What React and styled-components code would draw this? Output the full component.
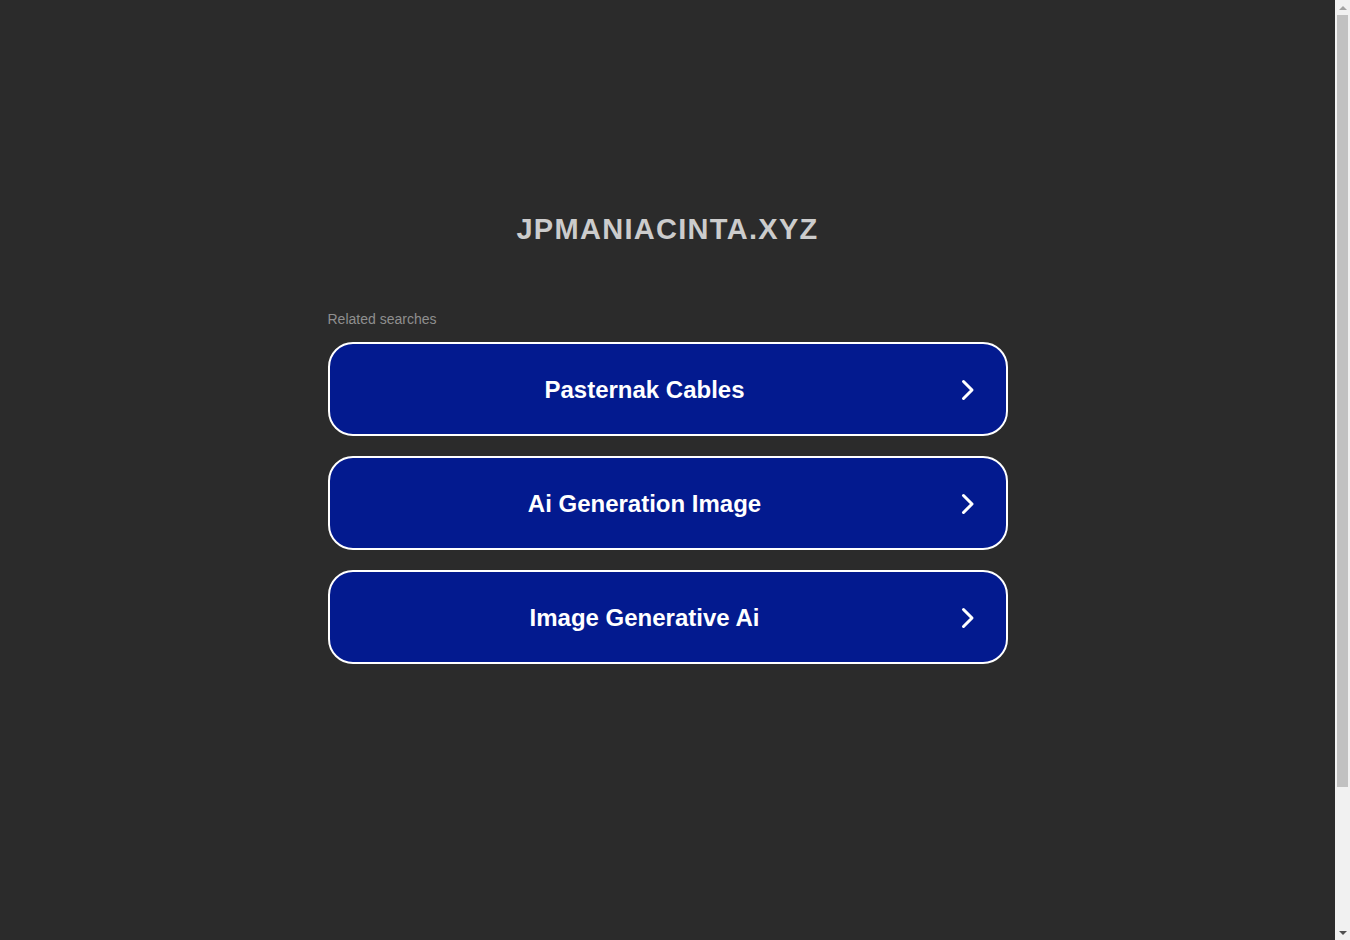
import styled, { createGlobalStyle } from 'styled-components';

const GlobalStyle = createGlobalStyle`
  html, body {
    margin: 0;
    padding: 0;
    background: #2b2b2b;
  }

  body {
    font-family: "Liberation Sans", Arial, sans-serif;
  }
`;

const Page = styled.div`
  min-height: 1100px;
  display: flex;
  flex-direction: column;
  align-items: center;
  padding: 213px 15px 0 0;
  box-sizing: border-box;
`;

const Domain = styled.h1`
  margin: 0 0 65px;
  font-size: 29px;
  line-height: 33px;
  font-weight: 700;
  letter-spacing: 1.3px;
  color: #cccccc;
  text-align: center;
`;

const Results = styled.div`
  width: 680px;
  display: flex;
  flex-direction: column;
`;

const Label = styled.div`
  font-size: 14px;
  line-height: 16px;
  color: #8f8f8f;
  margin-bottom: 15px;
`;

const List = styled.div`
  display: flex;
  flex-direction: column;
  gap: 20px;
`;

const SearchLink = styled.a`
  display: flex;
  align-items: center;
  height: 94px;
  box-sizing: border-box;
  padding: 2px 14px 0 15px;
  border: 2px solid #ffffff;
  border-radius: 25px;
  background: #031a8f;
  color: #ffffff;
  text-decoration: none;
  cursor: pointer;
`;

const LinkText = styled.span`
  flex: 1;
  text-align: center;
  font-size: 24px;
  font-weight: 700;
`;

const Arrow = styled.span`
  width: 47px;
  display: flex;
  justify-content: center;
  align-items: center;
`;

// fake browser scrollbar, the page is taller than the window
const ScrollTrack = styled.div`
  position: fixed;
  top: 0;
  right: 0;
  bottom: 0;
  width: 15px;
  background: #f1f1f1;
  display: flex;
  flex-direction: column;
  align-items: center;
`;

const ScrollButton = styled.div`
  height: 15px;
  width: 15px;
  display: flex;
  align-items: center;
  justify-content: center;

  &::before {
    content: '';
    border-left: 4px solid transparent;
    border-right: 4px solid transparent;
    ${(p) => (p.down ? 'border-top: 4px solid #505050;' : 'border-bottom: 4px solid #a3a3a3;')}
  }
`;

const ScrollThumb = styled.div`
  width: 11px;
  height: 772px;
  background: #c1c1c1;
`;

const Spacer = styled.div`
  flex: 1;
`;

const searches = ['Pasternak Cables', 'Ai Generation Image', 'Image Generative Ai'];

const Chevron = () => (
  <svg width="16" height="22" viewBox="0 0 16 22" fill="none">
    <path d="M3.5 2.5 L12 11 L3.5 19.5" stroke="#ffffff" strokeWidth="3" strokeLinecap="round" strokeLinejoin="round" />
  </svg>
);

const App = () => {
  return (
    <>
      <GlobalStyle />
      <Page>
        <Domain>JPMANIACINTA.XYZ</Domain>
        <Results>
          <Label>Related searches</Label>
          <List>
            {searches.map((s) => (
              <SearchLink key={s}>
                <LinkText>{s}</LinkText>
                <Arrow><Chevron /></Arrow>
              </SearchLink>
            ))}
          </List>
        </Results>
      </Page>
      <ScrollTrack>
        <ScrollButton />
        <ScrollThumb />
        <Spacer />
        <ScrollButton down />
      </ScrollTrack>
    </>
  );
};

export default App;
